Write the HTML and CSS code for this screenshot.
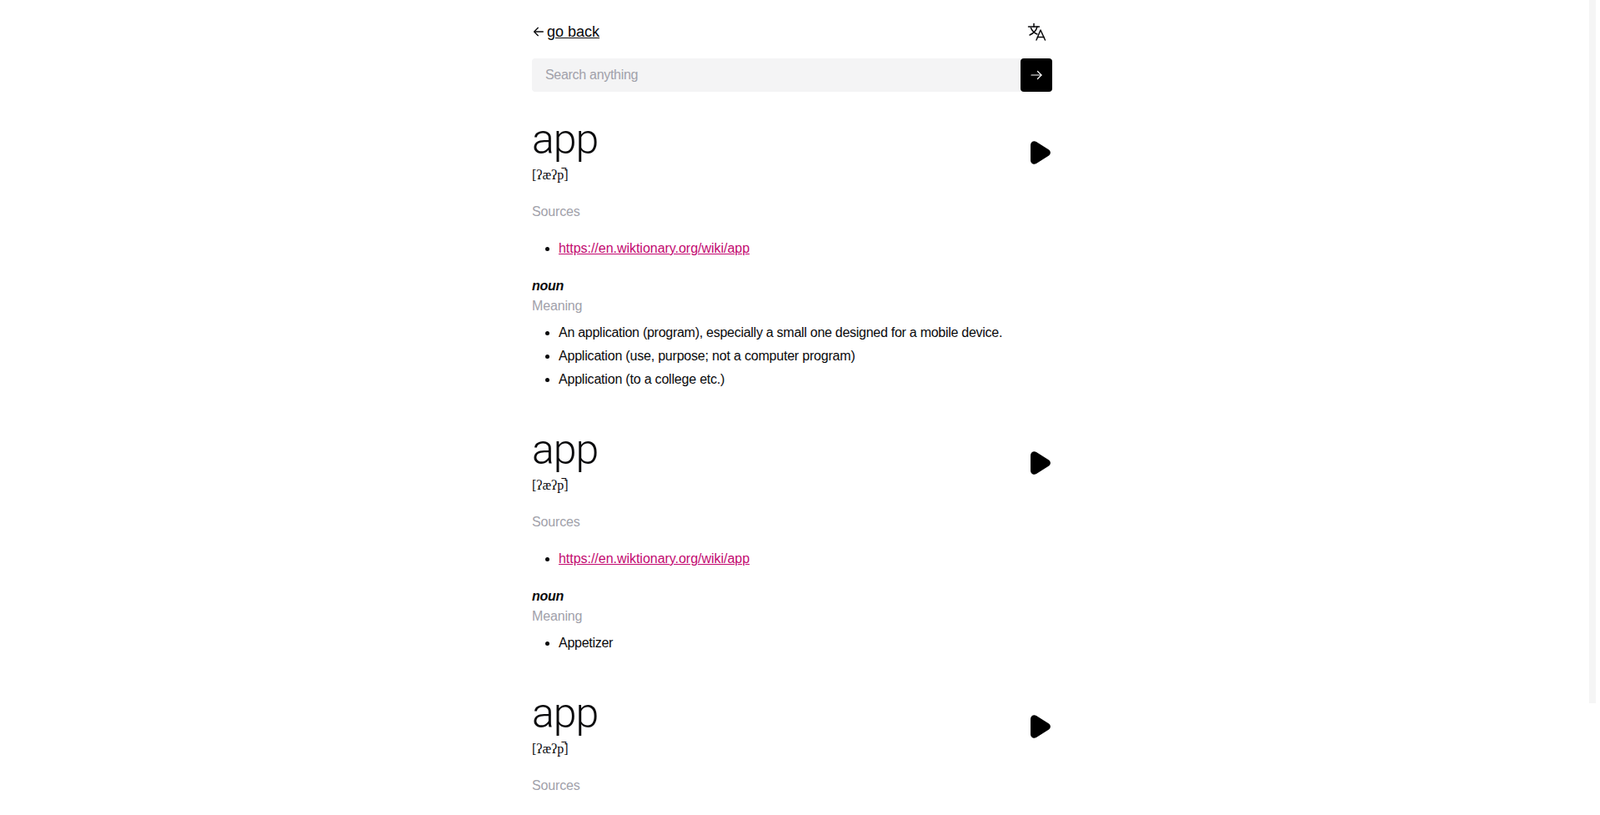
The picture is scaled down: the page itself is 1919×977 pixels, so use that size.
FILE: index.html
```html
<!DOCTYPE html>
<html lang="en">
<head>
    <meta charset="UTF-8">
    <meta name="viewport" content="width=device-width, initial-scale=1.0">
    <title>Dictionary - app</title>
    <link rel="stylesheet" href="styles.css">
</head>
<body>
    <div class="scroll-thumb"></div>
    <main class="container">
        <nav class="top-bar">
            <div class="back">
                <svg class="back-icon" viewBox="0 0 24 24" fill="none" stroke="currentColor" stroke-width="2" stroke-linecap="round" stroke-linejoin="round"><path d="M20 12H5"/><path d="M11 5l-7 7 7 7"/></svg>
                <a href="#" class="back-link">go back</a>
            </div>
            <button class="lang-button" aria-label="Change language">
                <svg viewBox="0 0 24 24" fill="none" stroke="currentColor" stroke-width="1.5" stroke-linecap="round" stroke-linejoin="round"><path d="M1.5 6h13"/><path d="M8 2.5V6"/><path d="M12 6c-1 4-4.5 8-9 10"/><path d="M4.5 7.5c1.2 3.5 4 6 7.5 7.5"/><path d="M11 22l5-12 5.5 12"/><path d="M12.5 18.5h7.5"/></svg>
            </button>
        </nav>

        <form class="search">
            <input class="search-input" type="text" placeholder="Search anything">
            <button class="search-button" type="button" aria-label="Search">
                <svg viewBox="0 0 24 24" fill="none" stroke="currentColor" stroke-width="1.6" stroke-linecap="round" stroke-linejoin="round"><path d="M4 12h16"/><path d="M14 6l6 6-6 6"/></svg>
            </button>
        </form>

        <article class="entry">
            <header class="entry-head">
                <div>
                    <h1 class="word">app</h1>
                    <p class="phonetic">[ʔæʔp̚]</p>
                </div>
                <button class="play" aria-label="Play"><svg viewBox="0 0 24 28"><path d="M0 5C0 1 4-1 7 1L22 10.5C24.5 12.5 24.5 15.5 22 17.5L7 27C4 29 0 27 0 23z"/></svg></button>
            </header>
            <p class="label label-sources">Sources</p>
            <ul class="list">
                <li><a class="source-link" href="#">https://en.wiktionary.org/wiki/app</a></li>
            </ul>
            <h2 class="part">noun</h2>
            <p class="label">Meaning</p>
            <ul class="list meanings">
                <li>An application (program), especially a small one designed for a mobile device.</li>
                <li>Application (use, purpose; not a computer program)</li>
                <li>Application (to a college etc.)</li>
            </ul>
        </article>

        <article class="entry">
            <header class="entry-head">
                <div>
                    <h1 class="word">app</h1>
                    <p class="phonetic">[ʔæʔp̚]</p>
                </div>
                <button class="play" aria-label="Play"><svg viewBox="0 0 24 28"><path d="M0 5C0 1 4-1 7 1L22 10.5C24.5 12.5 24.5 15.5 22 17.5L7 27C4 29 0 27 0 23z"/></svg></button>
            </header>
            <p class="label label-sources">Sources</p>
            <ul class="list">
                <li><a class="source-link" href="#">https://en.wiktionary.org/wiki/app</a></li>
            </ul>
            <h2 class="part">noun</h2>
            <p class="label">Meaning</p>
            <ul class="list meanings">
                <li>Appetizer</li>
            </ul>
        </article>

        <article class="entry">
            <header class="entry-head">
                <div>
                    <h1 class="word">app</h1>
                    <p class="phonetic">[ʔæʔp̚]</p>
                </div>
                <button class="play" aria-label="Play"><svg viewBox="0 0 24 28"><path d="M0 5C0 1 4-1 7 1L22 10.5C24.5 12.5 24.5 15.5 22 17.5L7 27C4 29 0 27 0 23z"/></svg></button>
            </header>
            <p class="label label-sources">Sources</p>
        </article>
    </main>
</body>
</html>
```

FILE: styles.css
```css
* {
    margin: 0;
    padding: 0;
    box-sizing: border-box;
}

html, body {
    height: 100%;
    overflow: hidden;
}

body {
    font-family: "Liberation Sans", Arial, sans-serif;
    font-size: 16px;
    line-height: 24px;
    color: #09090b;
    background: #fff;
    padding-right: 19px;
}

.scroll-thumb {
    position: fixed;
    top: 0;
    right: 5px;
    width: 8px;
    height: 843px;
    background: #f5f5f5;
}

.container {
    width: 624px;
    margin: 0 auto;
    padding-top: 20px;
}

.top-bar {
    display: flex;
    align-items: center;
    justify-content: space-between;
    height: 36px;
}

.back {
    display: flex;
    align-items: center;
    gap: 2px;
}

.back-icon { width: 16px; height: 16px; }

.back-link {
    color: #09090b;
    font-size: 18px;
}

.lang-button {
    width: 36px;
    height: 36px;
    display: flex;
    align-items: center;
    justify-content: center;
    border: none;
    background: none;
    color: #09090b;
}

.lang-button svg { width: 24px; height: 24px; }

.search {
    display: flex;
    height: 40px;
    margin-top: 14px;
}

.search-input {
    flex: 1;
    min-width: 0;
    padding: 0 16px;
    border: none;
    border-radius: 4px 0 0 4px;
    background: #f4f4f5;
    font: inherit;
    letter-spacing: -0.3px;
}

.search-input::placeholder { color: #a1a1aa; }

.search-button {
    width: 38px;
    display: flex;
    align-items: center;
    justify-content: center;
    border: none;
    border-radius: 4px;
    background: #000;
    color: #fff;
}

.search-button svg { width: 18px; height: 18px; }

.entry { padding-top: 28px; padding-bottom: 15px; }

.entry-head {
    display: flex;
    align-items: center;
    justify-content: space-between;
}

.word {
    font-family: Roboto, "Liberation Sans", sans-serif;
    font-size: 50px;
    font-weight: 300;
    line-height: 58px;
    letter-spacing: -1px;
}

.phonetic {
    font-family: "Liberation Serif", serif;
    font-size: 16px;
    margin-top: 2px;
}

.play {
    width: 24px;
    height: 28px;
    border: none;
    background: none;
    margin-right: 2px;
    margin-top: 5px;
}

.play svg { display: block; width: 100%; height: 100%; overflow: visible; }
.play path { fill: #000; }

.label {
    color: #a1a1aa;
    letter-spacing: -0.15px;
}

.label-sources { margin-top: 20px; }

.list {
    list-style: disc;
    padding-left: 32px;
    margin-top: 20px;
}

.source-link { color: #c2086f; letter-spacing: -0.03px; }

.part {
    font-size: 16px;
    font-weight: 700;
    font-style: italic;
    letter-spacing: -0.3px;
    margin-top: 21px;
}

.meanings { margin-top: 8px; letter-spacing: -0.27px; }
.meanings li + li { margin-top: 4px; letter-spacing: -0.2px; }
```
